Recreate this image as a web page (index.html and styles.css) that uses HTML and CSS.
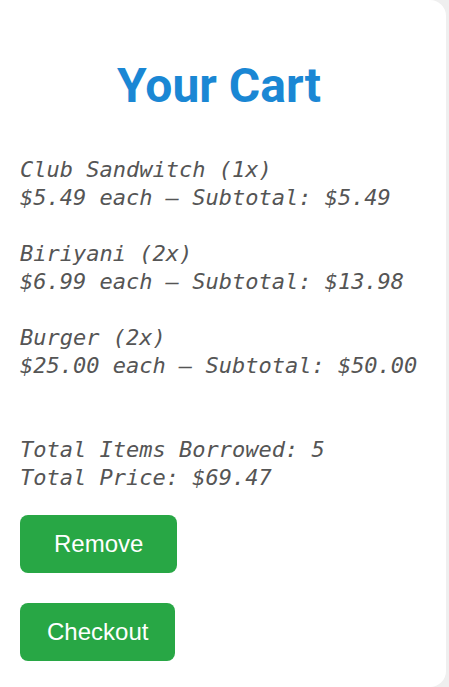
FILE: index.html
```html
<!DOCTYPE html>
<html>
<head>
<meta charset="utf-8">
<link rel="stylesheet" href="styles.css">
</head>
<body>
<div class="card">
  <h1 class="title">Your Cart</h1>
  <div class="items">
    <p class="item">Club Sandwitch (1x)<br>$5.49 each — Subtotal: $5.49</p>
    <p class="item">Biriyani (2x)<br>$6.99 each — Subtotal: $13.98</p>
    <p class="item">Burger (2x)<br>$25.00 each — Subtotal: $50.00</p>
  </div>
  <p class="totals">Total Items Borrowed: 5<br>Total Price: $69.47</p>
  <div class="actions">
    <button class="btn btn-remove">Remove</button>
    <button class="btn btn-checkout">Checkout</button>
  </div>
</div>
</body>
</html>
```
FILE: styles.css
```css
html, body {
  margin: 0;
  padding: 0;
  background: #efefef;
}
.card {
  box-sizing: border-box;
  width: 446px;
  height: 687px;
  background: #ffffff;
  border-radius: 0 16px 16px 0;
  padding: 58px 20px 0 20px;
}
.title {
  margin: 0 0 0 -8px;
  text-align: center;
  font-family: Roboto, "Noto Sans", sans-serif;
  font-weight: 700;
  font-size: 48px;
  line-height: 56px;
  color: #1a87d4;
}
.items {
  margin-top: 42px;
}
.item, .totals {
  margin: 0 0 28px 0;
  font-family: "DejaVu Sans Mono", monospace;
  font-style: italic;
  font-size: 22px;
  line-height: 28px;
  color: #555555;
}
.totals {
  margin-top: 56px;
  margin-bottom: 23px;
}
.actions {
  display: flex;
  flex-direction: column;
  align-items: flex-start;
  gap: 30px;
}
.btn {
  border: none;
  border-radius: 8px;
  background: #28a745;
  color: #ffffff;
  font-family: "Liberation Sans", Arial, sans-serif;
  font-size: 24px;
  line-height: 28px;
  padding: 15px 34px;
}
.btn-checkout {
  padding: 15px 27px;
}
```
